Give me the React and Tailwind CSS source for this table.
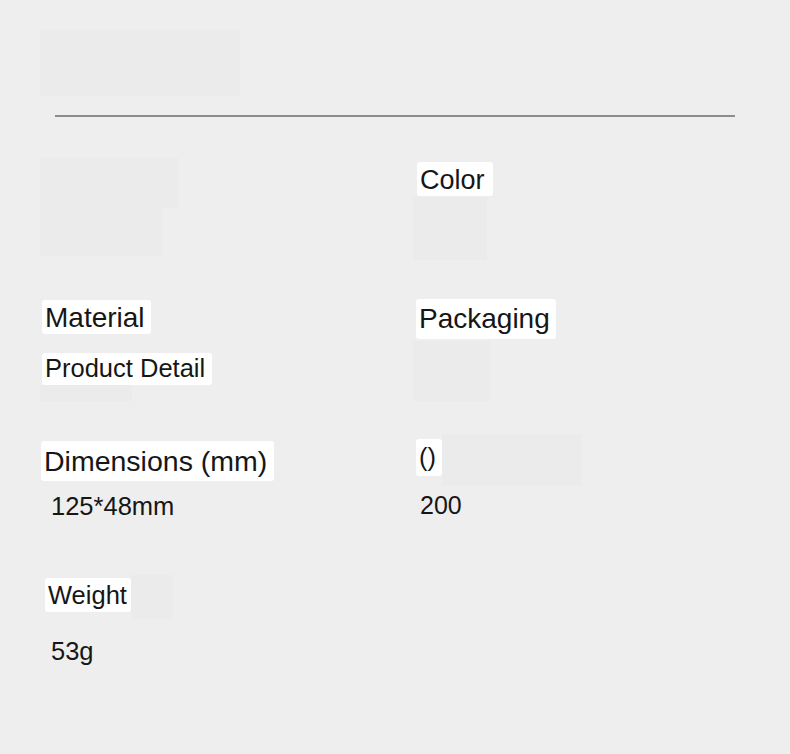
function Label({ children, className = '' }) {
  return (
    <span
      className={`inline-block self-start rounded-[3px] bg-white pl-[3px] leading-[1.15] text-[#161616] ${className}`}
    >
      {children}
    </span>
  )
}

function Faint({ className = '' }) {
  return <div className={`bg-[#ebebeb] ${className}`} />
}

export default function App() {
  return (
    <div
      className="min-h-screen w-full bg-[#eeeeee] px-[40px] pt-[30px]"
      style={{ fontFamily: '"Liberation Sans", Arial, sans-serif' }}
    >
      {/* title placeholder */}
      <Faint className="h-[66px] w-[200px]" />

      {/* divider */}
      <div className="mx-[15px] mt-[19px] h-[2px] bg-[#8c8c8c]" />

      {/* row 1 */}
      <div className="mt-[41px] grid h-[100px] grid-cols-[373px_1fr]">
        <div className="flex flex-col">
          <Faint className="h-[50px] w-[138px]" />
          <Faint className="h-[48px] w-[122px]" />
        </div>
        <div className="flex flex-col">
          <Label className="ml-[4px] mt-[4px] pr-[8px] pt-[3px] pb-[0px] text-[27px]">Color</Label>
          <Faint className="mt-[1px] h-[63px] w-[74px]" />
        </div>
      </div>

      {/* row 2 */}
      <div className="mt-[41px] grid h-[101px] grid-cols-[373px_1fr]">
        <div className="flex flex-col">
          <Label className="ml-[2px] mt-[1px] pr-[6px] pt-[2px] pb-[0px] text-[28px]">Material</Label>
          <Label className="ml-[2px] mt-[19px] pr-[7px] py-[1px] text-[25.5px]">Product Detail</Label>
          <Faint className="h-[16px] w-[92px]" />
        </div>
        <div className="flex flex-col">
          <Label className="ml-[3px] pr-[6px] py-[4px] text-[28px]">Packaging</Label>
          <Faint className="mt-[2px] h-[60px] w-[77px]" />
        </div>
      </div>

      {/* row 3 */}
      <div className="mt-[39px] grid h-[85px] grid-cols-[373px_1fr]">
        <div className="flex flex-col">
          <Label className="ml-[1px] mt-[2px] pr-[7px] pt-[4px] pb-[3px] text-[28.5px]">Dimensions (mm)</Label>
          <span className="ml-[11px] mt-[11px] text-[25.5px] leading-[1.15] text-[#161616]">125*48mm</span>
        </div>
        <div className="flex flex-col">
          <div className="flex items-start">
            <Label className="ml-[3px] pr-[6px] py-[4px] text-[25.5px]">()</Label>
            <Faint className="-mt-[5px] h-[52px] w-[140px]" />
          </div>
          <span className="ml-[7px] mt-[5px] text-[25px] leading-[1.15] text-[#161616]">200</span>
        </div>
      </div>

      {/* row 4 */}
      <div className="mt-[54px] grid grid-cols-[373px_1fr]">
        <div className="flex flex-col">
          <div className="flex items-start">
            <Label className="ml-[5px] pr-[4px] pt-[3px] pb-[2px] text-[25.5px]">Weight</Label>
            <Faint className="-mt-[3px] h-[44px] w-[42px]" />
          </div>
          <span className="ml-[11px] mt-[18px] text-[25.5px] leading-[1.15] text-[#161616]">53g</span>
        </div>
        <div />
      </div>
    </div>
  )
}
